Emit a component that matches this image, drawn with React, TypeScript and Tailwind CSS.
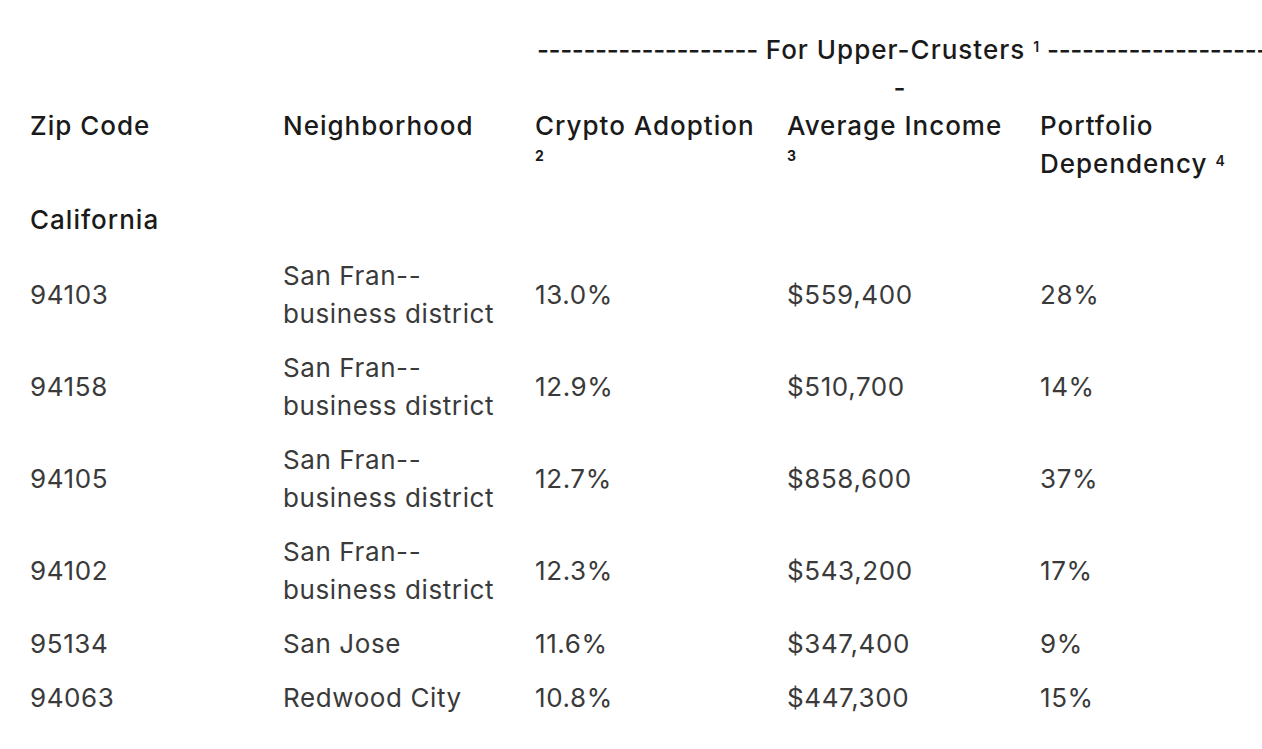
const rows = [
  { zip: '94103', hood: ['San Fran--', 'business district'], crypto: '13.0%', income: '$559,400', dep: '28%' },
  { zip: '94158', hood: ['San Fran--', 'business district'], crypto: '12.9%', income: '$510,700', dep: '14%' },
  { zip: '94105', hood: ['San Fran--', 'business district'], crypto: '12.7%', income: '$858,600', dep: '37%' },
  { zip: '94102', hood: ['San Fran--', 'business district'], crypto: '12.3%', income: '$543,200', dep: '17%' },
  { zip: '95134', hood: ['San Jose'], crypto: '11.6%', income: '$347,400', dep: '9%' },
  { zip: '94063', hood: ['Redwood City'], crypto: '10.8%', income: '$447,300', dep: '15%' },
]

export default function App() {
  return (
    <main
      className="min-h-screen w-full overflow-hidden bg-white pl-[30px]"
      style={{ fontFamily: 'Inter, "Noto Sans", sans-serif' }}
    >
      <table className="table-fixed border-collapse text-[26px] leading-[38px]" style={{ width: 1260 }}>
        <colgroup>
          <col className="w-[253px]" />
          <col className="w-[252px]" />
          <col className="w-[252px]" />
          <col className="w-[253px]" />
          <col className="w-[250px]" />
        </colgroup>
        <thead className="font-medium text-[#1a1a1a] tracking-[1px]">
          {/* group header */}
          <tr>
            <th className="p-0 pt-[31px]" />
            <th className="p-0 pt-[31px]" />
            <th colSpan={3} className="p-0 pt-[31px] font-medium text-left align-top">
              <div className="whitespace-nowrap pl-[2px]">
                <span className="tracking-[-0.4px]">-------------------</span> For Upper-Crusters{' '}
                <sup className="text-[14px] font-semibold tracking-normal">1</sup>{' '}
                <span className="tracking-[-0.4px]">--------------------</span>
              </div>
              <div className="w-[730px] text-center">-</div>
            </th>
          </tr>
          <tr>
            <th className="p-0 pb-[10px] text-left align-top font-medium">Zip Code</th>
            <th className="p-0 pb-[10px] text-left align-top font-medium">Neighborhood</th>
            <th className="p-0 pb-[10px] text-left align-top font-medium">
              <div>Crypto Adoption</div>
              <div className="text-[14px] font-bold leading-[20px] pt-[1px]">2</div>
            </th>
            <th className="p-0 pb-[10px] text-left align-top font-medium">
              <div>Average Income</div>
              <div className="text-[14px] font-bold leading-[20px] pt-[1px]">3</div>
            </th>
            <th className="p-0 pb-[10px] text-left align-top font-medium">
              <div>Portfolio</div>
              <div>
                Dependency <sup className="text-[14px] font-semibold tracking-normal">4</sup>
              </div>
            </th>
          </tr>
        </thead>
        <tbody className="text-[#3a3a3a] tracking-[0.6px]">
          <tr>
            <td colSpan={5} className="p-0 pt-[8px] pb-[10px] font-medium text-[#1a1a1a] tracking-[1px]">
              California
            </td>
          </tr>
          {rows.map((r) => (
            <tr key={r.zip}>
              <td className="py-[8px] px-0 align-middle">{r.zip}</td>
              <td className="py-[8px] px-0 align-middle">
                {r.hood.map((h) => (
                  <div key={h}>{h}</div>
                ))}
              </td>
              <td className="py-[8px] px-0 align-middle">{r.crypto}</td>
              <td className="py-[8px] px-0 align-middle">{r.income}</td>
              <td className="py-[8px] px-0 align-middle">{r.dep}</td>
            </tr>
          ))}
        </tbody>
      </table>
    </main>
  )
}
